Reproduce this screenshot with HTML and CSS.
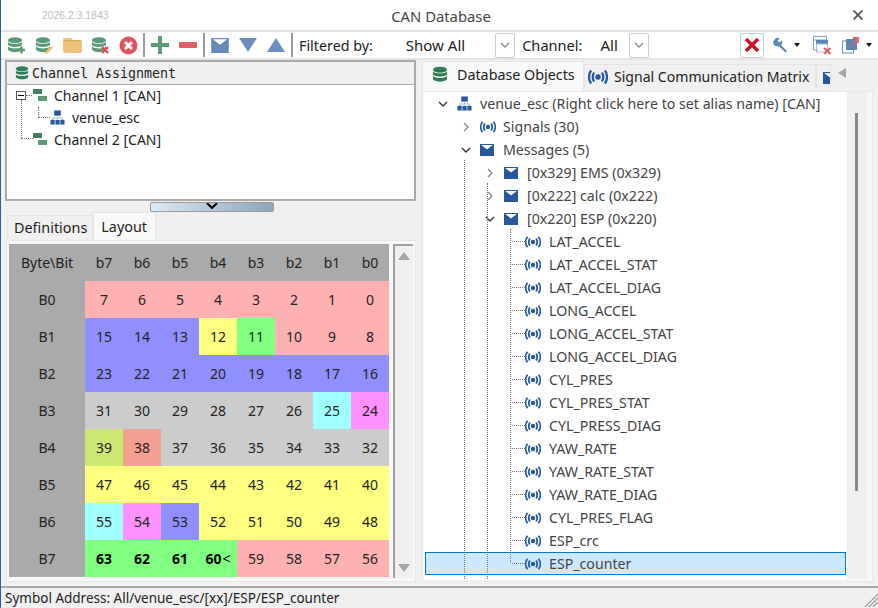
FILE: index.html
```html
<!DOCTYPE html>
<html lang="en">
<head>
<meta charset="utf-8">
<title>CAN Database</title>
<link rel="stylesheet" href="styles.css">
</head>
<body>
<svg class="defs" width="0" height="0" aria-hidden="true">
  <symbol id="db" viewBox="0 0 16 16">
    <ellipse cx="8" cy="3.2" rx="7" ry="3"/>
    <path d="M1 5C3 7.6 13 7.6 15 5V8C13 10.6 3 10.6 1 8Z"/>
    <path d="M1 9.6C3 12.2 13 12.2 15 9.6V12.8C13 16 3 16 1 12.8Z"/>
  </symbol>
  <symbol id="net" viewBox="0 0 16 16">
    <rect x="4.5" y="0.5" width="7" height="5.5" fill="#25599b"/>
    <path d="M8 6V9M3 11V8.5H13V11" fill="none" stroke="#9dbbe0"/>
    <rect x="0.5" y="10.5" width="4.5" height="5" fill="#25599b"/>
    <rect x="5.8" y="10.5" width="4.5" height="5" fill="#25599b"/>
    <rect x="11" y="10.5" width="4.5" height="5" fill="#25599b"/>
  </symbol>
  <symbol id="mail" viewBox="0 0 14 12">
    <path d="M0 0H14V12H0Z" fill="#25599b"/>
    <path d="M1.2 1H12.8L7 5.4Z" fill="#fff"/>
  </symbol>
  <symbol id="sig" viewBox="0 0 16 12">
    <circle cx="8" cy="6" r="2.2" fill="#25599b"/>
    <path d="M4.9 2.4C3.5 4.6 3.5 7.4 4.9 9.6M11.1 2.4C12.5 4.6 12.5 7.4 11.1 9.6" fill="none" stroke="#25599b" stroke-width="1.8"/>
    <path d="M2.5 .8C.2 3.8.2 8.2 2.5 11.2M13.5 .8C15.8 3.8 15.8 8.2 13.5 11.2" fill="none" stroke="#25599b" stroke-width="1.8"/>
  </symbol>
  <symbol id="chan" viewBox="0 0 14 12">
    <rect x="0" y="0" width="9" height="5" fill="#3f7f5f"/>
    <rect x="5" y="7" width="9" height="5" fill="#5f9a78"/>
  </symbol>
  <symbol id="chev" viewBox="0 0 10 10">
    <path d="M1 3L5 7L9 3" fill="none" stroke="currentColor" stroke-width="1.4"/>
  </symbol>
  <symbol id="chevr" viewBox="0 0 10 10">
    <path d="M3 1L7 5L3 9" fill="none" stroke="currentColor" stroke-width="1.4"/>
  </symbol>
</svg>

<div class="app">
  <header class="titlebar">
    <span class="version">2026.2.3.1843</span>
    <span class="title">CAN Database</span>
    <svg class="close" viewBox="0 0 10 10" width="10" height="10"><path d="M.5 .5L9.5 9.5M9.5 .5L.5 9.5" stroke="#555" stroke-width="1.8"/></svg>
  </header>

  <div class="toolbar">
    <span class="tool"><svg class="db-tool" width="19" height="19" viewBox="0 0 19 19"><use href="#db" width="16" height="16" x="0" y="1"/><path d="M14.5 10.5V17.5M11 14H18" stroke="#5b9a78" stroke-width="2.4" fill="none"/></svg></span>
    <span class="tool"><svg class="db-tool" width="19" height="19" viewBox="0 0 19 19"><use href="#db" width="16" height="16" x="0" y="1"/><path d="M10 18L11 15L16 10L18 12L13 17Z" fill="#f0c070"/></svg></span>
    <span class="tool"><svg width="19" height="15" viewBox="0 0 19 15"><path d="M0 2Q0 0 2 0H8L9.5 2H17Q19 2 19 4V13Q19 15 17 15H2Q0 15 0 13Z" fill="#f0c27a"/><path d="M1 2H18V3.5H1Z" fill="#d9a85f"/></svg></span>
    <span class="tool"><svg class="db-tool" width="19" height="19" viewBox="0 0 19 19"><use href="#db" width="16" height="16" x="0" y="1"/><path d="M11 11L17 17M17 11L11 17" stroke="#e0505f" stroke-width="2.4"/></svg></span>
    <span class="tool"><svg width="19" height="19" viewBox="0 0 19 19"><circle cx="9.5" cy="9.5" r="9" fill="#e0505f"/><path d="M6 6L13 13M13 6L6 13" stroke="#fff" stroke-width="3"/></svg></span>
    <span class="sep"></span>
    <span class="tool"><svg width="18" height="18" viewBox="0 0 18 18"><path d="M7 0H11V7H18V11H11V18H7V11H0V7H7Z" fill="#5b9a78"/></svg></span>
    <span class="tool"><svg width="18" height="6" viewBox="0 0 18 6"><rect width="18" height="6" rx="1" fill="#e0606a"/></svg></span>
    <span class="sep"></span>
    <span class="tool"><svg class="soft" width="18" height="15"><use href="#mail"/></svg></span>
    <span class="tool"><svg width="18" height="14" viewBox="0 0 18 14"><path d="M0 0H18L9 14Z" fill="#6a8fbf"/></svg></span>
    <span class="tool"><svg width="18" height="14" viewBox="0 0 18 14"><path d="M0 14H18L9 0Z" fill="#6a8fbf"/></svg></span>
    <span class="sep"></span>
    <span class="label filter-label">Filtered by:</span>
    <span class="label filter-value">Show All</span>
    <span class="drop"><svg width="10" height="10" class="chev-grey"><use href="#chev"/></svg></span>
    <span class="label channel-label">Channel:</span>
    <span class="label channel-value">All</span>
    <span class="drop"><svg width="10" height="10" class="chev-grey"><use href="#chev"/></svg></span>
    <span class="spacer"></span>
    <span class="xbtn"><svg width="14" height="14" viewBox="0 0 14 14"><path d="M1 1L13 13M13 1L1 13" stroke="#c8102e" stroke-width="3.4"/></svg></span>
    <span class="tool-s wrench"><svg width="16" height="16" viewBox="0 0 16 16"><path d="M1 5L3 2Q5 0 8 1L5.5 3.5L7.5 5.5L10 3Q11 6 9 8L15 14L13.5 15.5L7.5 9.5Q4 10 2 8Z" fill="#5b86bb"/></svg></span>
    <span class="caret"></span>
    <span class="tool-s winx"><svg width="19" height="19" viewBox="0 0 19 19"><path d="M.5 .5H13.5V4H.5ZM.5 4V14H5" fill="none" stroke="#7ea3cf"/><rect x="3" y="4" width="12" height="4" fill="#5b86bb"/><rect x="3.5" y="8" width="11" height="8" fill="none" stroke="#9fbcdd"/><path d="M11 12L17.5 18M17.5 12L11 18" stroke="#e0606a" stroke-width="2.2"/></svg></span>
    <span class="tool-s exp"><svg width="18" height="18" viewBox="0 0 18 18"><rect x=".5" y="5" width="11" height="12" fill="#fff" stroke="#6a8fbf"/><rect x="4" y="3" width="11" height="11" fill="#5b86bb"/><path d="M9 10L15 3M11 2H16V7" stroke="#e0606a" stroke-width="1.8" fill="none"/></svg></span>
    <span class="caret"></span>
  </div>

  <main class="main">
    <section class="left">
      <div class="assign">
        <div class="assign-head"><svg class="green" width="14" height="14"><use href="#db"/></svg><span>Channel Assignment</span></div>
        <div class="ltree">
          <div class="lrow">
            <i class="box"></i><i class="ln lh1"></i><i class="ln lv1"></i>
            <svg width="14" height="12"><use href="#chan"/></svg><span>Channel 1 [CAN]</span>
          </div>
          <div class="lrow lsub">
            <i class="ln lv2"></i><i class="ln lh2"></i>
            <svg width="15" height="15"><use href="#net"/></svg><span>venue_esc</span>
          </div>
          <div class="lrow">
            <i class="ln lh3"></i>
            <svg width="14" height="12"><use href="#chan"/></svg><span>Channel 2 [CAN]</span>
          </div>
        </div>
      </div>
      <div class="splitter"><svg width="12" height="6" viewBox="0 0 12 6"><path d="M1 0L6 5L11 0" fill="none" stroke="#000" stroke-width="2"/></svg></div>
      <div class="ltabs">
        <span class="ltab">Definitions</span>
        <span class="ltab on">Layout</span>
      </div>
      <div class="lpanel">
        <div class="grid">
          <b class="h">Byte\Bit</b><b class="h">b7</b><b class="h">b6</b><b class="h">b5</b><b class="h">b4</b><b class="h">b3</b><b class="h">b2</b><b class="h">b1</b><b class="h">b0</b>
          <b class="h">B0</b><b class="p">7</b><b class="p">6</b><b class="p">5</b><b class="p">4</b><b class="p">3</b><b class="p">2</b><b class="p">1</b><b class="p">0</b>
          <b class="h">B1</b><b class="u">15</b><b class="u">14</b><b class="u">13</b><b class="y">12</b><b class="g">11</b><b class="p">10</b><b class="p">9</b><b class="p">8</b>
          <b class="h">B2</b><b class="u">23</b><b class="u">22</b><b class="u">21</b><b class="u">20</b><b class="u">19</b><b class="u">18</b><b class="u">17</b><b class="u">16</b>
          <b class="h">B3</b><b class="n">31</b><b class="n">30</b><b class="n">29</b><b class="n">28</b><b class="n">27</b><b class="n">26</b><b class="c">25</b><b class="m">24</b>
          <b class="h">B4</b><b class="o">39</b><b class="s">38</b><b class="n">37</b><b class="n">36</b><b class="n">35</b><b class="n">34</b><b class="n">33</b><b class="n">32</b>
          <b class="h">B5</b><b class="y">47</b><b class="y">46</b><b class="y">45</b><b class="y">44</b><b class="y">43</b><b class="y">42</b><b class="y">41</b><b class="y">40</b>
          <b class="h">B6</b><b class="c">55</b><b class="m">54</b><b class="u">53</b><b class="y">52</b><b class="y">51</b><b class="y">50</b><b class="y">49</b><b class="y">48</b>
          <b class="h">B7</b><b class="g bold">63</b><b class="g bold">62</b><b class="g bold">61</b><b class="g bold">60<small>&lt;</small></b><b class="p">59</b><b class="p">58</b><b class="p">57</b><b class="p">56</b>
        </div>
        <div class="vscroll">
          <svg width="12" height="8" viewBox="0 0 12 8"><path d="M0 8H12L6 0Z" fill="#a6a6a6"/></svg>
          <svg width="12" height="8" viewBox="0 0 12 8"><path d="M0 0H12L6 8Z" fill="#a6a6a6"/></svg>
        </div>
      </div>
    </section>

    <section class="right">
      <div class="rtabs">
        <span class="rtab on"><svg class="green" width="16" height="17"><use href="#db"/></svg>Database Objects</span>
        <span class="rtab sigtab"><svg width="20" height="16"><use href="#sig"/></svg>Signal Communication Matrix</span>
        <span class="rtab stub"><svg width="14" height="16"><use href="#mail"/></svg></span>
        <svg class="tabarrow" width="8" height="10" viewBox="0 0 8 10"><path d="M8 0V10L0 5Z" fill="#a6a6a6"/></svg>
      </div>
      <div class="rpanel">
        <div class="rtree">
          <i class="ln g1"></i><i class="ln g2"></i><i class="ln g3"></i>
          <div class="row l0"><svg class="cv dark" width="10" height="10"><use href="#chev"/></svg><svg class="ti" width="15" height="15"><use href="#net"/></svg><span>venue_esc (Right click here to set alias name) [CAN]</span></div>
          <div class="row l1"><svg class="cv grey" width="10" height="10"><use href="#chevr"/></svg><svg class="si" width="16" height="12"><use href="#sig"/></svg><span>Signals (30)</span></div>
          <div class="row l1"><svg class="cv dark" width="10" height="10"><use href="#chev"/></svg><svg class="mi" width="14" height="12"><use href="#mail"/></svg><span>Messages (5)</span></div>
          <div class="row l2"><svg class="cv grey" width="10" height="10"><use href="#chevr"/></svg><svg class="mi" width="14" height="12"><use href="#mail"/></svg><span>[0x329] EMS (0x329)</span></div>
          <div class="row l2"><svg class="cv grey" width="10" height="10"><use href="#chevr"/></svg><svg class="mi" width="14" height="12"><use href="#mail"/></svg><span>[0x222] calc (0x222)</span></div>
          <div class="row l2"><svg class="cv dark" width="10" height="10"><use href="#chev"/></svg><svg class="mi" width="14" height="12"><use href="#mail"/></svg><span>[0x220] ESP (0x220)</span></div>
          <div class="row l3"><svg class="ti" width="16" height="12"><use href="#sig"/></svg><span>LAT_ACCEL</span></div>
          <div class="row l3"><svg class="ti" width="16" height="12"><use href="#sig"/></svg><span>LAT_ACCEL_STAT</span></div>
          <div class="row l3"><svg class="ti" width="16" height="12"><use href="#sig"/></svg><span>LAT_ACCEL_DIAG</span></div>
          <div class="row l3"><svg class="ti" width="16" height="12"><use href="#sig"/></svg><span>LONG_ACCEL</span></div>
          <div class="row l3"><svg class="ti" width="16" height="12"><use href="#sig"/></svg><span>LONG_ACCEL_STAT</span></div>
          <div class="row l3"><svg class="ti" width="16" height="12"><use href="#sig"/></svg><span>LONG_ACCEL_DIAG</span></div>
          <div class="row l3"><svg class="ti" width="16" height="12"><use href="#sig"/></svg><span>CYL_PRES</span></div>
          <div class="row l3"><svg class="ti" width="16" height="12"><use href="#sig"/></svg><span>CYL_PRES_STAT</span></div>
          <div class="row l3"><svg class="ti" width="16" height="12"><use href="#sig"/></svg><span>CYL_PRESS_DIAG</span></div>
          <div class="row l3"><svg class="ti" width="16" height="12"><use href="#sig"/></svg><span>YAW_RATE</span></div>
          <div class="row l3"><svg class="ti" width="16" height="12"><use href="#sig"/></svg><span>YAW_RATE_STAT</span></div>
          <div class="row l3"><svg class="ti" width="16" height="12"><use href="#sig"/></svg><span>YAW_RATE_DIAG</span></div>
          <div class="row l3"><svg class="ti" width="16" height="12"><use href="#sig"/></svg><span>CYL_PRES_FLAG</span></div>
          <div class="row l3"><svg class="ti" width="16" height="12"><use href="#sig"/></svg><span>ESP_crc</span></div>
          <div class="row l3 sel"><svg class="ti" width="16" height="12"><use href="#sig"/></svg><span>ESP_counter</span></div>
        </div>
        <div class="rscroll"><i class="thumb"></i></div>
      </div>
    </section>
  </main>

  <footer class="status">
    <span>Symbol Address: All/venue_esc/[xx]/ESP/ESP_counter</span>
    <svg class="grip" width="14" height="14" viewBox="0 0 14 14"><path d="M14 1L1 14M14 5L5 14M14 9L9 14" stroke="#999" stroke-width="1.2"/></svg>
  </footer>
</div>
</body>
</html>
```
FILE: styles.css
```css
* { box-sizing: border-box; }
html, body { margin: 0; padding: 0; height: 100%; overflow: hidden; }
body { font-family: "Noto Sans", "Open Sans", sans-serif; font-size: 14px; color: #111; background: #f0f0f0; }
.defs { position: absolute; }
svg { display: block; flex: none; }
i { font-style: normal; }
.app { display: flex; flex-direction: column; height: 608px; width: 878px; border-left: 1px solid #2a5fa8; }

.titlebar { height: 32px; flex: none; background: #fff; border-bottom: 2px solid #e4e4e4; display: grid; grid-template-columns: 1fr auto 1fr; align-items: center; padding: 0 15px 0 18px; }
.version { color: #bdbdbd; font-size: 10.4px; font-family: "Liberation Sans", sans-serif; margin-left: 23px; }
.title { color: #444; font-size: 14.8px; grid-column: 2; margin-top: 2px; }
.close { justify-self: end; grid-column: 3; }

.toolbar { height: 28px; flex: none; display: flex; align-items: center; background: #fff; border-bottom: 2px solid #e4e4e4; padding-left: 1px; }
.tool { width: 28px; height: 24px; display: flex; align-items: center; justify-content: center; flex: none; }
.db-tool { fill: #5b9a78; }
.soft { opacity: .7; }
.sep { width: 2px; height: 24px; background: #9a9a9a; margin: 0 1px; flex: none; }
.label { white-space: nowrap; font-size: 14.6px; color: #222; }
.filter-label { margin-left: 5px; font-size: 14.3px; }
.filter-value { margin-left: 33px; font-size: 15px; }
.channel-label { margin-left: 7px; }
.channel-value { margin-left: 18px; font-size: 15px; }
.drop { width: 20px; height: 25px; border: 1px solid #ccc; border-radius: 2px; background: #fff; display: flex; align-items: center; justify-content: center; margin-left: 30px; flex: none; }
.channel-value + .drop { margin-left: 11px; }
.chev-grey { color: #888; }
.spacer { flex: 1; }
.xbtn { width: 24px; height: 25px; border: 1px solid #ccc; border-radius: 3px; display: flex; align-items: center; justify-content: center; flex: none; }
.tool-s { display: flex; align-items: center; flex: none; }
.wrench { margin-left: 8px; }
.caret { width: 0; height: 0; border: 3.5px solid transparent; border-top: 4px solid #111; border-bottom: 0; margin-left: 6px; flex: none; }
.winx { margin-left: 13px; }
.exp { margin-left: 10px; }
.exp + .caret { margin-right: 6px; }

.main { flex: 1; display: flex; min-height: 0; background: #f0f0f0; }
.left { width: 421px; flex: none; display: flex; flex-direction: column; padding: 0 6px 4px 4px; }
.assign { height: 141px; border: 2px solid #aaa; background: #fff; flex: none; }
.assign-head { height: 23px; background: #f0f0f0; border-bottom: 1px solid #aaa; display: flex; align-items: center; gap: 3px; padding-left: 8px; font: 13.3px "DejaVu Sans Mono", monospace; color: #222; }
.lrow { height: 22px; position: relative; display: flex; align-items: center; gap: 7px; padding: 0 0 2px 26px; color: #222; }
.lsub { padding-left: 43px; }
.ln { position: absolute; display: block; border: 0 dotted #777; }
.box { position: absolute; left: 9px; top: 6px; width: 10px; height: 9px; border: 1px solid #555; background: #fff; }
.box::after { content: ""; position: absolute; left: 1px; right: 1px; top: 3px; height: 1px; background: #000; }
.lh1 { left: 19px; top: 10px; width: 6px; border-top-width: 1px; }
.lv1 { left: 14px; top: 15px; height: 38px; border-left-width: 1px; z-index: 1; }
.lv2 { left: 31px; top: 0; height: 10px; border-left-width: 1px; }
.lh2 { left: 31px; top: 10px; width: 12px; border-top-width: 1px; }
.lh3 { left: 14px; top: 9px; width: 12px; border-top-width: 1px; }

.splitter { height: 10px; width: 124px; margin: 1px 0 0 145px; border: 1px solid #999; border-radius: 2px; background: linear-gradient(90deg, #dbeaf6, #8ea4b8); display: flex; justify-content: center; flex: none; }
.ltabs { height: 28px; display: flex; align-items: flex-end; padding-left: 2px; flex: none; }
.ltab { height: 25px; padding: 0 5px 0 6px; line-height: 24px; background: #f0f0f0; border: 1px solid #e4e4e4; border-bottom: 0; color: #222; font-size: 14.4px; }
.ltab.on { height: 28px; padding: 0 8px 0 7px; line-height: 28px; background: #f8f8f8; }
.lpanel { flex: 1; display: flex; gap: 4px; padding: 3px 2px; background: #f8f8f8; border: 1px solid #e8e8e8; margin-left: 1px; min-height: 0; }
.grid { display: grid; grid-template-columns: 76px repeat(8, 38px); grid-auto-rows: 37px; }
.grid b { font-weight: 400; display: flex; align-items: center; justify-content: center; color: #222; }
.grid .bold { font-weight: 700; color: #000; }
.grid small { font-size: 14px; font-weight: 400; margin-left: 1px; }
.h { background: #aaa; }
.p { background: #ffb0b0; }
.u { background: #8f8fff; }
.y { background: #ffff80; }
.g { background: #80ff80; }
.n { background: #ccc; }
.c { background: #a0ffff; }
.m { background: #ff90ff; }
.o { background: #cde870; }
.s { background: #f3a090; }
.vscroll { width: 20px; border-left: 2px solid #a0a0a0; border-top: 2px solid #a0a0a0; background: #f0f0f0; display: flex; flex-direction: column; justify-content: space-between; align-items: center; padding: 6px 0; }

.right { flex: 1; min-width: 0; display: flex; flex-direction: column; padding-bottom: 4px; }
.rtabs { height: 31px; position: relative; display: flex; align-items: flex-end; flex: none; }
.rtab { height: 27px; display: flex; align-items: center; gap: 6px; padding: 0 6px 3px 3px; background: #f0f0f0; border: 1px solid #e4e4e4; border-bottom: 0; color: #222; white-space: nowrap; font-size: 14.07px; }
.rtab.on { height: 30px; width: 162px; background: #f8f8f8; padding: 0 0 4px 9px; gap: 9px; font-size: 14.3px; }
.rtab.stub { width: 15px; padding: 0 0 0 6px; overflow: hidden; }
.tabarrow { position: absolute; left: 416px; top: 8px; }
.green { fill: #2e7d55; }
.rpanel { flex: 1; display: flex; margin-right: 5px; background: #f8f8f8; border: 1px solid #e8e8e8; padding: 0 5px 2px 1px; min-height: 0; }
.rtree { flex: 1; background: #fff; position: relative; overflow: hidden; padding-left: 1px; font-size: 14.2px; }
.row { height: 23px; display: flex; align-items: center; color: #444; white-space: nowrap; position: relative; }
.l0 { padding-left: 13px; }
.l1 { padding-left: 36px; }
.l2 { padding-left: 60px; }
.l3 { padding-left: 100px; }
.cv { width: 10px; margin-right: 9px; }
.dark { color: #333; }
.grey { color: #888; }
.ti { margin-right: 8px; }
.si { margin-right: 7px; }
.mi { margin-right: 9px; }
.sel { background: #cce8ff; outline: 1px solid #0078d7; outline-offset: -1px; margin-right: 1px; }
.g1 { left: 40px; top: 68px; bottom: 0; border-left-width: 1px; z-index: 1; }
.g2 { left: 63px; top: 91px; bottom: 0; border-left-width: 1px; z-index: 1; }
.g3 { left: 86px; top: 137px; height: 334px; width: 14px; border-left-width: 1px; z-index: 1; }
.l3::before { content: ""; position: absolute; left: 87px; width: 13px; top: 11px; border-top: 1px dotted #777; }
.rscroll { width: 20px; background: #f0f0f0; flex: none; position: relative; }
.thumb { position: absolute; left: 8px; top: 21px; width: 3px; height: 378px; background: #8a8a8a; }

.status { height: 22px; flex: none; border-top: 2px solid #aaa; display: flex; align-items: center; justify-content: space-between; padding: 0 0 1px 4px; color: #222; font-size: 13.5px; position: relative; background: #f0f0f0; }
.grip { align-self: flex-end; }
```
